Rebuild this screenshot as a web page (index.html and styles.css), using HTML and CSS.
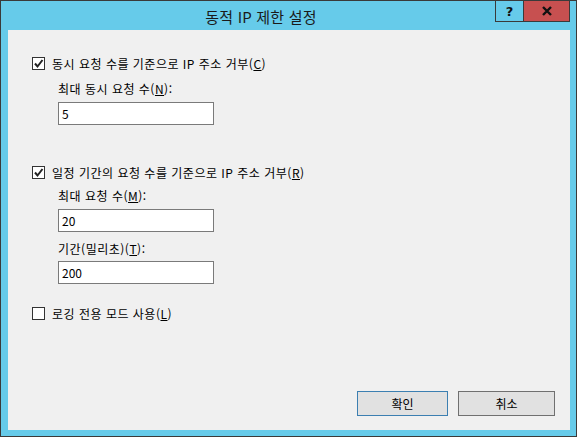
FILE: index.html
```html
<!DOCTYPE html>
<html lang="ko">
<head>
<meta charset="utf-8">
<title>동적 IP 제한 설정</title>
<link rel="stylesheet" href="styles.css">
</head>
<body>
<div class="window">
  <div class="titlebar">
    <span class="title">동적 IP 제한 설정</span>
    <div class="caption-buttons">
      <div class="cap-btn help">?</div>
      <div class="cap-btn close">
        <svg width="12" height="10" viewBox="0 0 12 10"><path d="M2 1 L10 9 M10 1 L2 9" stroke="#111" stroke-width="2.4" fill="none"/></svg>
      </div>
    </div>
  </div>
  <div class="client">
    <label class="check-row">
      <span class="checkbox checked"><svg width="11" height="11" viewBox="0 0 11 11"><path d="M2 5.5 L4.5 8.5 L9.5 2" stroke="#222" stroke-width="2" fill="none"/></svg></span>
      <span class="text">동시 요청 수를 기준으로 IP 주소 거부(<u>C</u>)</span>
    </label>
    <div class="field-label first">최대 동시 요청 수(<u>N</u>):</div>
    <div class="textbox tb1">5</div>

    <label class="check-row group2">
      <span class="checkbox checked"><svg width="11" height="11" viewBox="0 0 11 11"><path d="M2 5.5 L4.5 8.5 L9.5 2" stroke="#222" stroke-width="2" fill="none"/></svg></span>
      <span class="text">일정 기간의 요청 수를 기준으로 IP 주소 거부(<u>R</u>)</span>
    </label>
    <div class="field-label second">최대 요청 수(<u>M</u>):</div>
    <div class="textbox">20</div>
    <div class="field-label third">기간(밀리초)(<u>T</u>):</div>
    <div class="textbox tb3">200</div>

    <label class="check-row group3">
      <span class="checkbox"></span>
      <span class="text">로깅 전용 모드 사용(<u>L</u>)</span>
    </label>

    <div class="buttons">
      <div class="btn default">확인</div>
      <div class="btn cancel">취소</div>
    </div>
  </div>
</div>
</body>
</html>
```
FILE: styles.css
```css
* { box-sizing: border-box; }
html, body { margin: 0; padding: 0; }
body {
  width: 577px;
  height: 437px;
  overflow: hidden;
  font-family: "Noto Sans CJK KR", "Noto Sans", sans-serif;
  font-size: 12px;
  color: #000;
}
.window {
  width: 577px;
  height: 437px;
  border: 1px solid #3a3a3a;
  background: #66cbea;
  display: flex;
  flex-direction: column;
  padding: 0 6px 6px 7px;
  position: relative;
}
.titlebar {
  height: 29px;
  display: flex;
  align-items: center;
  justify-content: center;
  padding-right: 56px;
}
.title {
  font-size: 15px;
  color: #1a1a1a;
  letter-spacing: 0.2px;
  padding-top: 1px;
}
.caption-buttons {
  position: absolute;
  top: -1px;
  right: 6px;
  display: flex;
}
.cap-btn {
  height: 22px;
  border: 1px solid #3a3a3a;
  display: flex;
  align-items: center;
  justify-content: center;
}
.cap-btn.help {
  width: 29px;
  font-family: "DejaVu Sans", sans-serif;
  font-weight: bold;
  font-size: 13px;
  color: #111;
}
.cap-btn.close {
  width: 47px;
  margin-left: -1px;
  background: #c75050;
}
.client {
  flex: 1;
  background: #f0f0f0;
  display: flex;
  flex-direction: column;
  align-items: flex-start;
  padding: 27px 15px 14px 24px;
  letter-spacing: 0.5px;
}
.check-row {
  display: flex;
  align-items: center;
  height: 13px;
}
.checkbox {
  width: 13px;
  height: 13px;
  border: 1px solid #333;
  background: #fff;
  display: flex;
  align-items: center;
  justify-content: center;
}
.check-row .text {
  margin-left: 7px;
  line-height: 16px;
  white-space: nowrap;
}
.group2 { margin-top: 41px; }
.group3 { margin-top: 23px; }
.field-label {
  margin-left: 26px;
  line-height: 16px;
  white-space: nowrap;
}
.field-label.first { margin-top: 11px; }
.field-label.second { margin-top: 9px; }
.field-label.third { margin-top: 9px; }
.textbox {
  margin-left: 26px;
  margin-top: 5px;
  width: 156px;
  height: 23px;
  border: 1px solid #7a7a7a;
  background: #fff;
  padding-left: 3px;
  line-height: 21px;
  letter-spacing: 0;
}
.tb3 { margin-top: 4px; }
.buttons {
  margin-top: auto;
  align-self: flex-end;
  display: flex;
  gap: 10px;
  letter-spacing: 0;
}
.btn {
  height: 25px;
  background: #e1e1e1;
  border: 1px solid #707070;
  display: flex;
  align-items: center;
  justify-content: center;
}
.btn.default {
  width: 91px;
  border-color: #3c7fb1;
}
.btn.cancel {
  width: 97px;
}
u { text-decoration-thickness: 1px; text-underline-offset: 1px; }
```
